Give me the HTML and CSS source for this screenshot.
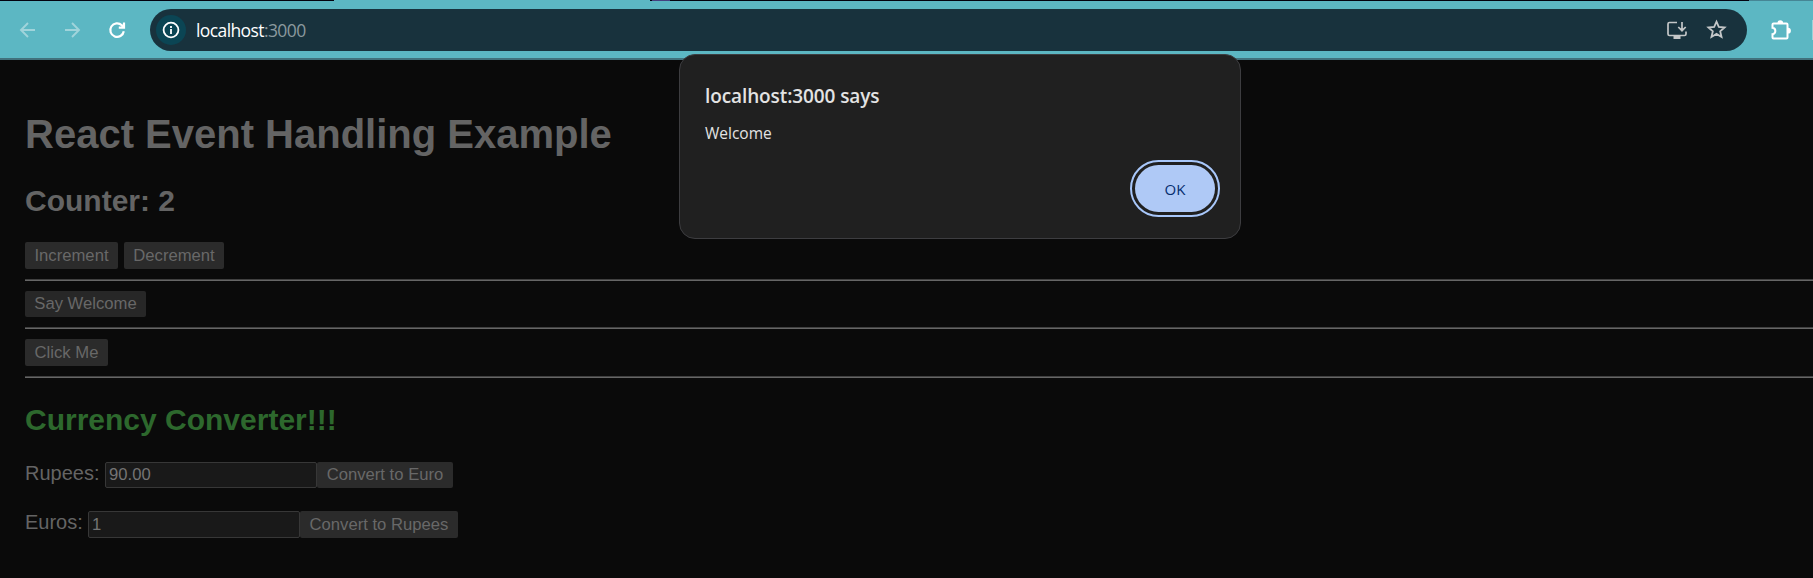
FILE: index.html
```html
<!DOCTYPE html>
<html lang="en">
<head>
<meta charset="utf-8">
<title>React Event Handling Example</title>
<link rel="stylesheet" href="styles.css">
</head>
<body>
<header class="browser">
  <div class="tabstrip"><span class="tab-active"></span><span class="tab-glow"></span><span class="window-edge"></span></div>
  <nav class="toolbar">
    <svg class="nav-icon faded back" viewBox="0 0 20 20"><path d="M17 10H3.5M10 3L3 10l7 7"/></svg>
    <svg class="nav-icon faded forward" viewBox="0 0 20 20"><path d="M3 10h13.5M10 3l7 7-7 7"/></svg>
    <svg class="nav-icon reload" viewBox="0 0 20 20"><path d="M16.8 11.2A6.8 6.8 0 1 1 14.8 5.2L16.6 7M17 2.5V7.6H11.8"/></svg>
    <div class="omnibox">
      <span class="site-info"><svg viewBox="0 0 18 18"><circle cx="9" cy="9" r="7.4"/><path d="M9 8v5M9 4.9v2"/></svg></span>
      <span class="url"><span class="host">localhost</span><span class="port">:3000</span></span>
      <svg class="install" viewBox="0 0 22 20"><path d="M11 2.500H3.500Q2 2.500 2 4v10q0 1.500 1.500 1.500h15q1.500 0 1.500-1.500v-2.500M16 2v8.500M12.300 7l3.700 3.700L19.700 7"/><path class="solid" d="M7.500 15h7v4h-7z"/></svg>
      <svg class="star" viewBox="0 0 20 20"><path d="M10 2.600l2.200 5 5.500.5-4.200 3.600 1.300 5.400-4.800-2.900-4.800 2.900 1.300-5.400-4.200-3.600 5.500-.5z"/></svg>
    </div>
    <svg class="extensions" viewBox="0 0 22 22"><path d="M3.500 4.500H16.500Q17.500 4.500 17.500 5.500V18.500Q17.500 19.500 16.500 19.500H3.500Q2.500 19.500 2.500 18.500V15.200C6.300 14.600 6.300 9.400 2.500 8.800V5.500Q2.500 4.500 3.500 4.500Z"/><path class="solid" d="M7.500 4a2.800 2.800 0 0 1 5.600 0zM18 8.800a2.900 2.900 0 0 1 0 5.800z"/></svg>
    <span class="divider"></span>
  </nav>
</header>
<main class="page">
  <h1>React Event Handling Example</h1>
  <h2 class="counter">Counter: 2</h2>
  <div class="actions"><button class="btn increment">Increment</button><button class="btn decrement">Decrement</button></div>
  <hr>
  <div class="actions welcome-row"><button class="btn welcome">Say Welcome</button></div>
  <hr>
  <div class="actions"><button class="btn click">Click Me</button></div>
  <hr>
  <h2 class="converter">Currency Converter!!!</h2>
  <div class="field"><label class="rupees" for="rupees">Rupees:</label><input id="rupees" type="text" value="90.00"><button class="btn to-euro">Convert to Euro</button></div>
  <div class="field euro-field"><label class="euros" for="euros">Euros:</label><input id="euros" type="text" value="1"><button class="btn to-rupees">Convert to Rupees</button></div>
</main>
<section class="dialog" role="alertdialog">
  <p class="dialog-title">localhost:3000 says</p>
  <p class="dialog-message">Welcome</p>
  <button class="ok">OK</button>
</section>
</body>
</html>
```
FILE: styles.css
```css
* { box-sizing: border-box; }
body { margin: 0; width: 1813px; height: 578px; overflow: hidden; background: #0a0a0a; font: 20px "Liberation Sans", Arial, sans-serif; color: #646464; }
svg { display: block; fill: none; stroke: currentColor; stroke-width: 2; flex: none; }
svg .solid { fill: currentColor; stroke: none; }
h1, h2, p { margin: 0; }

.browser { height: 60px; background: #5cb7c3; border-bottom: 2px solid #41717c; }
.tabstrip { display: flex; height: 1px; background: #02020f; }
.tab-active { width: 316px; margin-left: 334px; background: #5cb7c3; }
.tab-glow { width: 18px; margin-left: 2px; background: #444180; }
.window-edge { width: 64px; margin-left: auto; background: #468695; }
.toolbar { display: flex; align-items: center; height: 57px; padding-left: 18px; }
.nav-icon { width: 20px; height: 20px; color: #fff; stroke-width: 2.1; }
.faded { color: #a0d4db; stroke-width: 1.9; }
.forward { margin-left: 24px; }
.reload { margin-left: 25px; stroke-width: 2.2; }
.omnibox { display: flex; align-items: center; width: 1597px; height: 42px; margin: 0 23px; padding: 0 20px 0 6px; border-radius: 21px; background: #18323d; color: #c4c7c8; }
.site-info { display: grid; place-items: center; width: 30px; height: 30px; border-radius: 50%; background: #0b4554; color: #fff; }
.site-info svg { width: 18px; height: 18px; stroke-width: 1.8; }
.url { flex: 1; margin-left: 10px; font: 17.5px/30px "Open Sans", sans-serif; }
.host { color: #fff; letter-spacing: -0.6px; }
.port { color: #8b999e; letter-spacing: -0.6px; }
.install { width: 22px; height: 20px; stroke-width: 1.7; }
.star { width: 21px; height: 21px; margin-left: 18px; stroke-width: 1.7; }
.extensions { width: 22px; height: 22px; color: #fff; }
.divider { width: 1px; height: 20px; margin-left: auto; background: #9bd2d9; }

.page { padding: 51px 0 0 25px; }
h1 { font-size: 40px; line-height: 46px; }
h2 { font-size: 30px; line-height: 34px; }
.counter { margin: 27px 0 24px; }
.actions { display: flex; gap: 6px; height: 27px; }
.welcome-row { height: 26px; }
.btn { height: 100%; padding: 0; border: 0; border-radius: 2px; background: #2b2b2b; color: #686868; font: 16.667px "Liberation Sans", Arial, sans-serif; white-space: nowrap; }
.increment { width: 93px; }
.decrement { width: 100px; }
.welcome { width: 121px; background: #272727; }
.click { width: 83px; }
hr { height: 2px; margin: 10px 0; border: 0; border-top: 1px solid #404040; background: #666; }
.converter { margin: 25px 0 25px; color: #2d682d; }
.field { display: flex; height: 26px; }
.field label { line-height: 23px; }
.rupees { width: 80px; }
.euros { width: 63px; }
.field input { width: 212px; height: 100%; padding: 0 3px; border: 1px solid #373737; border-radius: 2px; outline: 0; background: #191919; color: #747474; font: 16.667px "Liberation Sans", Arial, sans-serif; }
.to-euro { width: 136px; }
.to-rupees { width: 158px; }
.euro-field { height: 27px; margin-top: 23px; }

.dialog { position: absolute; left: 679px; top: 54px; display: flex; flex-direction: column; width: 562px; height: 185px; padding: 26px 25px 26px; border: 1px solid #3d3d40; border-radius: 16px; background: #202020; color: #e3e3e3; font-family: "Open Sans", "Noto Sans", sans-serif; }
.dialog-title { font-size: 19px; font-weight: 600; line-height: 30px; letter-spacing: -0.1px; }
.dialog-message { margin-top: 10px; font-size: 15.5px; line-height: 24px; }
.ok { align-self: flex-end; width: 80px; height: 47px; margin-top: auto; padding: 0; border: 0; border-radius: 24px; outline: 2px solid #a8c7fa; outline-offset: 3px; background: #afc9f6; color: #062e6f; font: 500 15px "Open Sans", sans-serif; }
```
